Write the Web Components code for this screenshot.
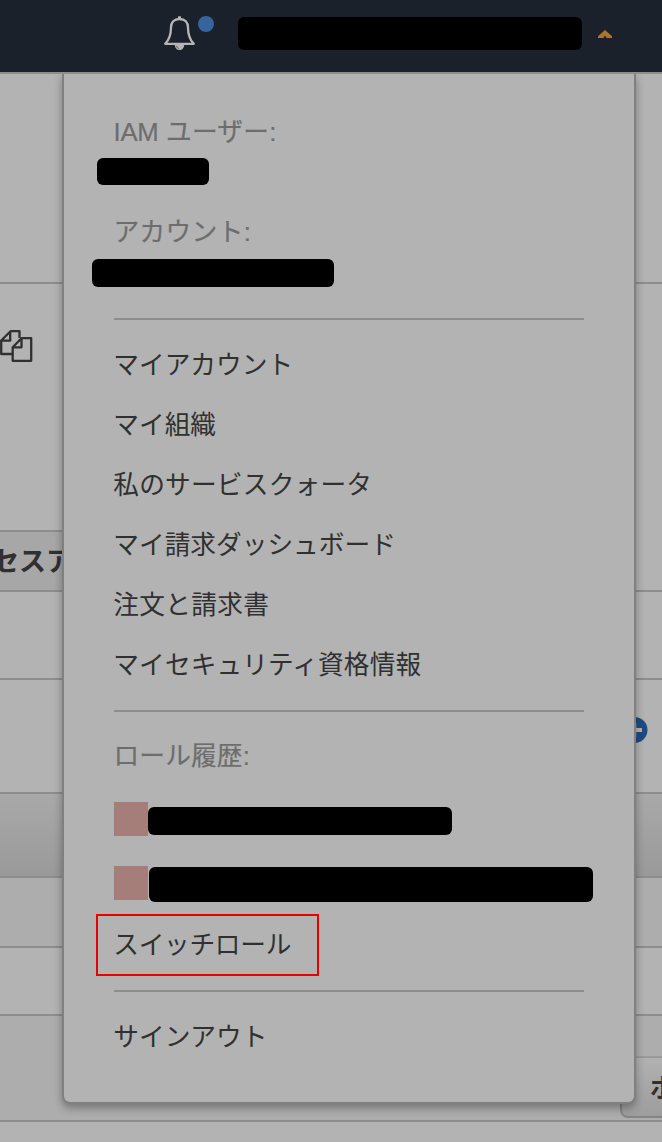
<!DOCTYPE html>
<html lang="ja">
<head>
<meta charset="utf-8">
<title>Console</title>
<style>
  body {
    margin: 0;
    width: 662px;
    height: 1142px;
    overflow: hidden;
    background: #b3b3b3;
    color: #303030;
    font: 25.7px "Liberation Sans", "Noto Sans CJK JP", sans-serif;
  }
</style>
</head>
<body>
<console-page>
  <console-nav slot="nav"></console-nav>
  <table-row style="--h: 210px"></table-row>
  <table-row style="--h: 248px; --line: linear-gradient(90deg, #8d8d8d 64px, transparent 64px)"><copy-icon></copy-icon></table-row>
  <table-row style="--h: 60px; --bg: linear-gradient(90deg, #a7a7a7 64px, #b3b3b3 64px)"><b>セスア</b></table-row>
  <table-row style="--h: 88px"></table-row>
  <table-row style="--h: 114px"><plus-badge></plus-badge></table-row>
  <table-row style="--h: 84px; --bg: linear-gradient(#a9a9a9, #999)"></table-row>
  <table-row style="--h: 70px; --bg: #adadad"></table-row>
  <table-row style="--h: 68px"></table-row>
  <table-row style="--h: 106px; --bg: #adadad"><page-button>ポ</page-button></table-row>
  <account-menu slot="menu">
    <menu-label style="letter-spacing: .25px"><span style="letter-spacing: -.2px">IAM</span> ユーザー:</menu-label>
    <masked-text style="--w: 112px; --h: 27px; margin: 6px 0 27px -17px"></masked-text>
    <menu-label style="letter-spacing: .35px">アカウント:</menu-label>
    <masked-text style="--w: 242px; --h: 28px; margin: 7px 0 31px -22px"></masked-text>
    <menu-divider style="margin-bottom: 14px"></menu-divider>
    <menu-item>マイアカウント</menu-item>
    <menu-item>マイ組織</menu-item>
    <menu-item style="letter-spacing: .2px">私のサービスクォータ</menu-item>
    <menu-item>マイ請求ダッシュボード</menu-item>
    <menu-item style="letter-spacing: .3px">注文と請求書</menu-item>
    <menu-item style="letter-spacing: .1px">マイセキュリティ資格情報</menu-item>
    <menu-divider style="margin: 16px 0 24px"></menu-divider>
    <menu-label style="letter-spacing: .15px">ロール履歴:</menu-label>
    <role-entry style="margin-top: 26px">
      <masked-text style="--w: 304px; --h: 28px; margin-top: 5px"></masked-text>
    </role-entry>
    <role-entry style="margin-top: 30px">
      <masked-text style="--w: 444px; --h: 35px; margin: 1px 0 0 1px"></masked-text>
    </role-entry>
    <menu-item marked style="letter-spacing: -.3px">スイッチロール</menu-item>
    <menu-divider style="margin: 14px 0"></menu-divider>
    <menu-item>サインアウト</menu-item>
  </account-menu>
</console-page>

<script>
// attach an open shadow root filled with the given markup
function define(name, html) {
  const temp = document.createElement("template");
  temp.innerHTML = html;
  customElements.define(name, class extends HTMLElement {
    constructor() {
      super();
      this.attachShadow({ mode: "open" });
      this.shadowRoot.appendChild(temp.content.cloneNode(true));
    }
  });
}

define("console-page", `
  <style>
    :host { display: block; position: relative; height: 1142px; overflow: hidden; }
    main { display: flex; flex-direction: column; }
  </style>
  <slot name="nav"></slot>
  <main><slot></slot></main>
  <slot name="menu"></slot>
`);

define("console-nav", `
  <style>
    :host {
      display: flex;
      align-items: flex-start;
      box-sizing: border-box;
      height: 74px;
      padding-left: 163px;
      background: #1b212b;
      border-bottom: 2px solid #8d8d8d;
    }
    .bell { margin-top: 15px; }
    .dot { width: 16px; height: 16px; margin: 16px 0 0 2px; border-radius: 50%; background: #36649c; }
    masked-text { margin: 17px 0 0 24px; }
    .caret { margin: 30px 0 0 16px; }
  </style>
  <svg class="bell" width="33" height="36" viewBox="0 0 33 36" fill="none" stroke="#b5b5b5" stroke-width="2.300" stroke-linejoin="round">
    <path d="M16.500 4C11 4 8 7.500 8 12.500C8 20 6.500 24.500 2.200 28.800H30.800C26.500 24.500 25 20 25 12.500C25 7.500 22 4 16.500 4Z"/>
    <path d="M15 1.300H18V4H15Z" fill="#b5b5b5" stroke="none"/>
    <path d="M11.800 29.500H21.200C21.200 33 19.200 35 16.500 35S11.800 33 11.800 29.500Z" fill="#b5b5b5" stroke="none"/>
    <path d="M13.300 30.800Q14 33.200 16.200 33.600" stroke="#4b5056" stroke-width=".8"/>
  </svg>
  <div class="dot"></div>
  <masked-text style="--w: 344px; --h: 32.5px"></masked-text>
  <svg class="caret" width="14" height="8" viewBox="0 0 14 8">
    <path d="M0 8V6.200L7 0L14 6.200V8H8.200V6.800L7 6L5.800 6.800V8Z" fill="#b0712b"/>
  </svg>
`);

define("table-row", `
  <style>
    :host {
      display: flex;
      flex-direction: column;
      flex: none;
      box-sizing: border-box;
      height: var(--h);
      background: var(--bg, none);
    }
    .cell { flex: 1; min-height: 0; }
    .line { height: 2px; background: var(--line, #8d8d8d); }
    ::slotted(b) { display: block; margin-left: -8px; line-height: 61px; font-size: 27px; }
  </style>
  <div class="cell"><slot></slot></div>
  <div class="line"></div>
`);

define("copy-icon", `
  <style>:host { display: block; padding-top: 46px; } svg { display: block; }</style>
  <svg width="33" height="33" viewBox="0 0 33 33" fill="none" stroke="#303030" stroke-width="2.300" stroke-linejoin="round">
    <path d="M12 24H1.200V10.500L10.500 1.200H19.500V8M1.500 10.700H10.200V1.500"/>
    <path d="M12.700 17.300L21.500 8.200H31.200V30.800H12.700ZM13 17.300H21.500V8.500"/>
  </svg>
`);

define("plus-badge", `
  <style>:host { display: block; padding: 37px 0 0 621px; } svg { display: block; }</style>
  <svg width="27" height="27" viewBox="0 0 27 27">
    <circle cx="13.500" cy="13" r="13" fill="#1f4a83"/>
    <path d="M5 11H11V6H15.300V11H21V15H15.300V20H11V15H5Z" fill="#b3b3b3"/>
  </svg>
`);

define("page-button", `
  <style>
    :host {
      display: block;
      box-sizing: border-box;
      width: 100px;
      height: 62px;
      margin: 40px 0 0 620px;
      padding-left: 28px;
      border: 2px solid #858585;
      border-top-color: #999;
      border-radius: 8px;
      background: linear-gradient(#b1b1b1, #9d9d9d);
      font-weight: bold;
      line-height: 61px;
    }
  </style>
  <slot></slot>
`);

// dropdown lying over the page
define("account-menu", `
  <style>
    :host {
      position: absolute;
      left: 62px;
      top: 74px;
      display: flex;
      flex-direction: column;
      box-sizing: border-box;
      width: 574px;
      height: 1030px;
      padding: 38px 50px 0;
      border: 2px solid #808080;
      border-top: 0;
      border-radius: 0 0 8px 8px;
      background: #b3b3b3;
      box-shadow: 0 4px 8px rgba(0, 0, 0, .32);
      clip-path: inset(0 -20px -20px -20px);
    }
  </style>
  <slot></slot>
`);

define("menu-label", `
  <style>
    :host {
      display: block;
      height: 40px;
      line-height: 41px;
      text-indent: -.5px;
      color: #6d6d6d;
      -webkit-text-stroke: .2px;
      white-space: nowrap;
    }
  </style>
  <slot></slot>
`);

define("menu-item", `
  <style>
    :host { display: block; height: 60px; line-height: 62px; text-indent: -.7px; white-space: nowrap; }
    :host([marked]) {
      box-sizing: border-box;
      width: 223px;
      height: 62px;
      margin: 14px 0 0 -18px;
      padding-left: 16px;
      border: 2px solid #e80000;
      line-height: 59px;
    }
  </style>
  <slot></slot>
`);

define("menu-divider", `
  <style>:host { display: block; flex: none; height: 2px; background: #8d8d8d; }</style>
`);

define("masked-text", `
  <style>:host { display: block; flex: none; width: var(--w); height: var(--h); border-radius: 6px; background: #000; }</style>
`);

define("role-entry", `
  <style>
    :host { display: flex; align-items: flex-start; height: 34px; }
    .color { flex: none; width: 34px; height: 34px; background: #a57e79; }
  </style>
  <div class="color"></div>
  <slot></slot>
`);
</script>
</body>
</html>
